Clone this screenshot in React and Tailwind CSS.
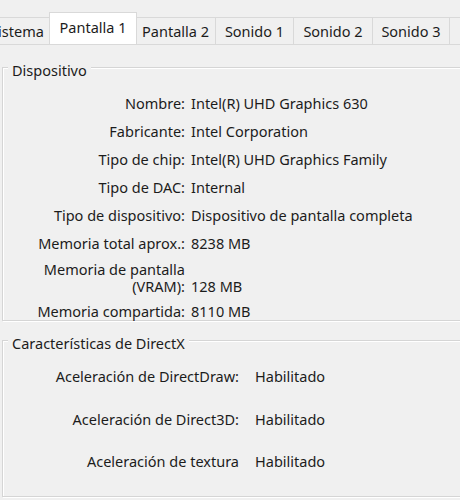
import React from 'react';

const tabs = [
  { label: 'Sistema', width: 'w-[66px] -ml-[16px]' },
  { label: 'Pantalla 1', width: 'w-[88px]', active: true },
  { label: 'Pantalla 2', width: 'w-[80px]' },
  { label: 'Sonido 1', width: 'w-[78px]' },
  { label: 'Sonido 2', width: 'w-[79px]' },
  { label: 'Sonido 3', width: 'w-[77px]' },
  { label: '', width: 'w-[60px]' },
];

const device = [
  ['Nombre:', 'Intel(R) UHD Graphics 630'],
  ['Fabricante:', 'Intel Corporation'],
  ['Tipo de chip:', 'Intel(R) UHD Graphics Family'],
  ['Tipo de DAC:', 'Internal'],
  ['Tipo de dispositivo:', 'Dispositivo de pantalla completa'],
  ['Memoria total aprox.:', '8238 MB'],
];

const directx = [
  ['Aceleración de DirectDraw:', 'Habilitado'],
  ['Aceleración de Direct3D:', 'Habilitado'],
  ['Aceleración de textura', 'Habilitado'],
];

function Tab({ tab }) {
  if (tab.active) {
    return (
      <div
        className={`${tab.width} relative z-10 -mx-[1px] flex h-[32px] shrink-0 items-start justify-center border border-b-0 border-[#d9d9d9] bg-white pt-[4px]`}
      >
        {tab.label}
      </div>
    );
  }
  return (
    <div
      className={`${tab.width} flex h-[27px] shrink-0 items-center justify-center border border-b-0 border-l-0 border-[#d9d9d9] bg-[#f0f0f0] pt-[1px] first:border-l`}
    >
      {tab.label}
    </div>
  );
}

function GroupBox({ title, className, children }) {
  return (
    <div
      className={`relative ml-[2px] w-[480px] border border-[#d5d5d5] shadow-[1px_1px_0_#ffffff,inset_1px_1px_0_#ffffff] ${className}`}
    >
      <div className="absolute -top-[8px] left-[5px] bg-[#f0f0f0] px-[4px] leading-[20px]">{title}</div>
      {children}
    </div>
  );
}

export default function App() {
  return (
    <div
      className="h-[500px] w-[460px] overflow-hidden bg-[#f0f0f0] text-[14.5px] text-[#1c1c1c]"
      style={{ fontFamily: '"Noto Sans", "Open Sans", sans-serif' }}
    >
      <div className="flex h-[45px] items-end whitespace-nowrap border-b border-[#d9d9d9] pt-[13px]">
        {tabs.map((tab, index) => (
          <Tab key={`${tab.label}-${index}`} tab={tab} />
        ))}
      </div>

      <GroupBox title="Dispositivo" className="mt-[22px] h-[254px] pt-[22px]">
        {device.map(([label, value]) => (
          <div key={label} className="flex h-[28px] items-center">
            <div className="w-[182px] text-right">{label}</div>
            <div className="pl-[6px]">{value}</div>
          </div>
        ))}
        <div className="flex h-[40px] items-center leading-[17px]">
          <div className="w-[182px] text-right">
            Memoria de pantalla
            <br />
            (VRAM):
          </div>
          <div className="pl-[6px] pt-[17px]">128 MB</div>
        </div>
        <div className="flex h-[28px] items-center">
          <div className="w-[182px] text-right">Memoria compartida:</div>
          <div className="pl-[6px]">8110 MB</div>
        </div>
      </GroupBox>

      <GroupBox title="Características de DirectX" className="mt-[19px] h-[157px] pt-[15px]">
        {directx.map(([label, value]) => (
          <div key={label} className="flex h-[42.5px] items-center">
            <div className="w-[236px] text-right">{label}</div>
            <div className="pl-[16px]">{value}</div>
          </div>
        ))}
      </GroupBox>
    </div>
  );
}
